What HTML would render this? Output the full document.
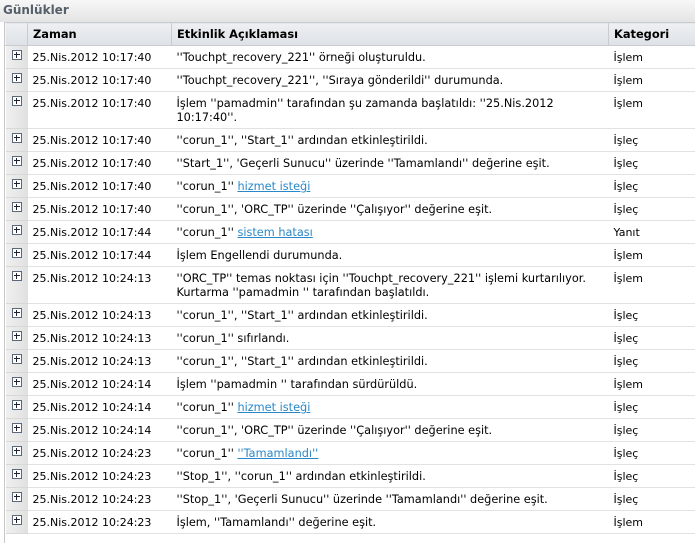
<!DOCTYPE html>
<html><head><meta charset="utf-8"><style>
body{margin:0;width:695px;height:543px;background:#fff;font-family:"DejaVu Sans","Liberation Sans",sans-serif;font-size:11px;color:#000;overflow:hidden;position:relative}
.title{position:absolute;left:0;top:0;width:695px;height:22px;background:linear-gradient(#f7f7f7,#e4e4e4);}
.title span{position:absolute;left:3px;top:3px;font-weight:bold;font-size:12px;color:#56606a}
.wrap{position:absolute;left:4px;top:22px;width:691px;height:521px;border-left:1px solid #c8c8c8;}
table{border-collapse:collapse;width:691px;table-layout:fixed}
th{height:23px;padding:0 0 0 5px;text-align:left;font-weight:bold;font-size:11.4px;background:linear-gradient(#eef0f3,#dde1e5);border-top:1px solid #c8ccd0;border-left:1px solid #f4f4f4;border-right:1px solid #c8ccd0;border-bottom:1px solid #c8ccd0;box-sizing:border-box}
td{height:23px;padding:0 0 0 5px;border-bottom:1px solid #e2e2e2;vertical-align:top;box-sizing:border-box;padding-top:5px;line-height:14px}
td:nth-child(3){font-size:11.3px}
td.i{background:linear-gradient(90deg,#f0f0f0,#e0e0e0);padding:4px 0 0 6px;border-bottom:1px solid #d8d8d8}
tr.t td{height:37px}
a{color:#2b88c8;text-decoration:underline}
.pl{display:inline-block;width:8px;height:8px;border:1px solid #5a6878;background:#fff;position:relative}
.pl:before{content:"";position:absolute;left:1px;top:3px;width:6px;height:1px;background:#223}
.pl:after{content:"";position:absolute;left:3px;top:1px;width:1px;height:6px;background:#223}
</style></head><body>
<div class="title"><span>Günlükler</span></div>
<div class="wrap"><table>
<colgroup><col style="width:22px"><col style="width:144px"><col style="width:437px"><col style="width:88px"></colgroup>
<tr><th></th><th>Zaman</th><th>Etkinlik Açıklaması</th><th>Kategori</th></tr>
<tr><td class="i"><span class="pl"></span></td><td>25.Nis.2012 10:17:40</td><td>''Touchpt_recovery_221'' örneği oluşturuldu.</td><td>İşlem</td></tr>
<tr><td class="i"><span class="pl"></span></td><td>25.Nis.2012 10:17:40</td><td>''Touchpt_recovery_221'', ''Sıraya gönderildi'' durumunda.</td><td>İşlem</td></tr>
<tr class="t"><td class="i"><span class="pl"></span></td><td>25.Nis.2012 10:17:40</td><td>İşlem ''pamadmin'' tarafından şu zamanda başlatıldı: ''25.Nis.2012<br>10:17:40''.</td><td>İşlem</td></tr>
<tr><td class="i"><span class="pl"></span></td><td>25.Nis.2012 10:17:40</td><td>''corun_1'', ''Start_1'' ardından etkinleştirildi.</td><td>İşleç</td></tr>
<tr><td class="i"><span class="pl"></span></td><td>25.Nis.2012 10:17:40</td><td>''Start_1'', 'Geçerli Sunucu'' üzerinde ''Tamamlandı'' değerine eşit.</td><td>İşleç</td></tr>
<tr><td class="i"><span class="pl"></span></td><td>25.Nis.2012 10:17:40</td><td>''corun_1'' <a>hizmet isteği</a></td><td>İşleç</td></tr>
<tr><td class="i"><span class="pl"></span></td><td>25.Nis.2012 10:17:40</td><td>''corun_1'', 'ORC_TP'' üzerinde ''Çalışıyor'' değerine eşit.</td><td>İşleç</td></tr>
<tr><td class="i"><span class="pl"></span></td><td>25.Nis.2012 10:17:44</td><td>''corun_1'' <a>sistem hatası</a></td><td>Yanıt</td></tr>
<tr><td class="i"><span class="pl"></span></td><td>25.Nis.2012 10:17:44</td><td>İşlem Engellendi durumunda.</td><td>İşlem</td></tr>
<tr class="t"><td class="i"><span class="pl"></span></td><td>25.Nis.2012 10:24:13</td><td>''ORC_TP'' temas noktası için ''Touchpt_recovery_221'' işlemi kurtarılıyor.<br>Kurtarma ''pamadmin '' tarafından başlatıldı.</td><td>İşlem</td></tr>
<tr><td class="i"><span class="pl"></span></td><td>25.Nis.2012 10:24:13</td><td>''corun_1'', ''Start_1'' ardından etkinleştirildi.</td><td>İşleç</td></tr>
<tr><td class="i"><span class="pl"></span></td><td>25.Nis.2012 10:24:13</td><td>''corun_1'' sıfırlandı.</td><td>İşleç</td></tr>
<tr><td class="i"><span class="pl"></span></td><td>25.Nis.2012 10:24:13</td><td>''corun_1'', ''Start_1'' ardından etkinleştirildi.</td><td>İşleç</td></tr>
<tr><td class="i"><span class="pl"></span></td><td>25.Nis.2012 10:24:14</td><td>İşlem ''pamadmin '' tarafından sürdürüldü.</td><td>İşlem</td></tr>
<tr><td class="i"><span class="pl"></span></td><td>25.Nis.2012 10:24:14</td><td>''corun_1'' <a>hizmet isteği</a></td><td>İşleç</td></tr>
<tr><td class="i"><span class="pl"></span></td><td>25.Nis.2012 10:24:14</td><td>''corun_1'', 'ORC_TP'' üzerinde ''Çalışıyor'' değerine eşit.</td><td>İşleç</td></tr>
<tr><td class="i"><span class="pl"></span></td><td>25.Nis.2012 10:24:23</td><td>''corun_1'' <a>''Tamamlandı''</a></td><td>İşleç</td></tr>
<tr><td class="i"><span class="pl"></span></td><td>25.Nis.2012 10:24:23</td><td>''Stop_1'', ''corun_1'' ardından etkinleştirildi.</td><td>İşleç</td></tr>
<tr><td class="i"><span class="pl"></span></td><td>25.Nis.2012 10:24:23</td><td>''Stop_1'', 'Geçerli Sunucu'' üzerinde ''Tamamlandı'' değerine eşit.</td><td>İşleç</td></tr>
<tr><td class="i"><span class="pl"></span></td><td>25.Nis.2012 10:24:23</td><td>İşlem, ''Tamamlandı'' değerine eşit.</td><td>İşlem</td></tr>
</table></div>
</body></html>
